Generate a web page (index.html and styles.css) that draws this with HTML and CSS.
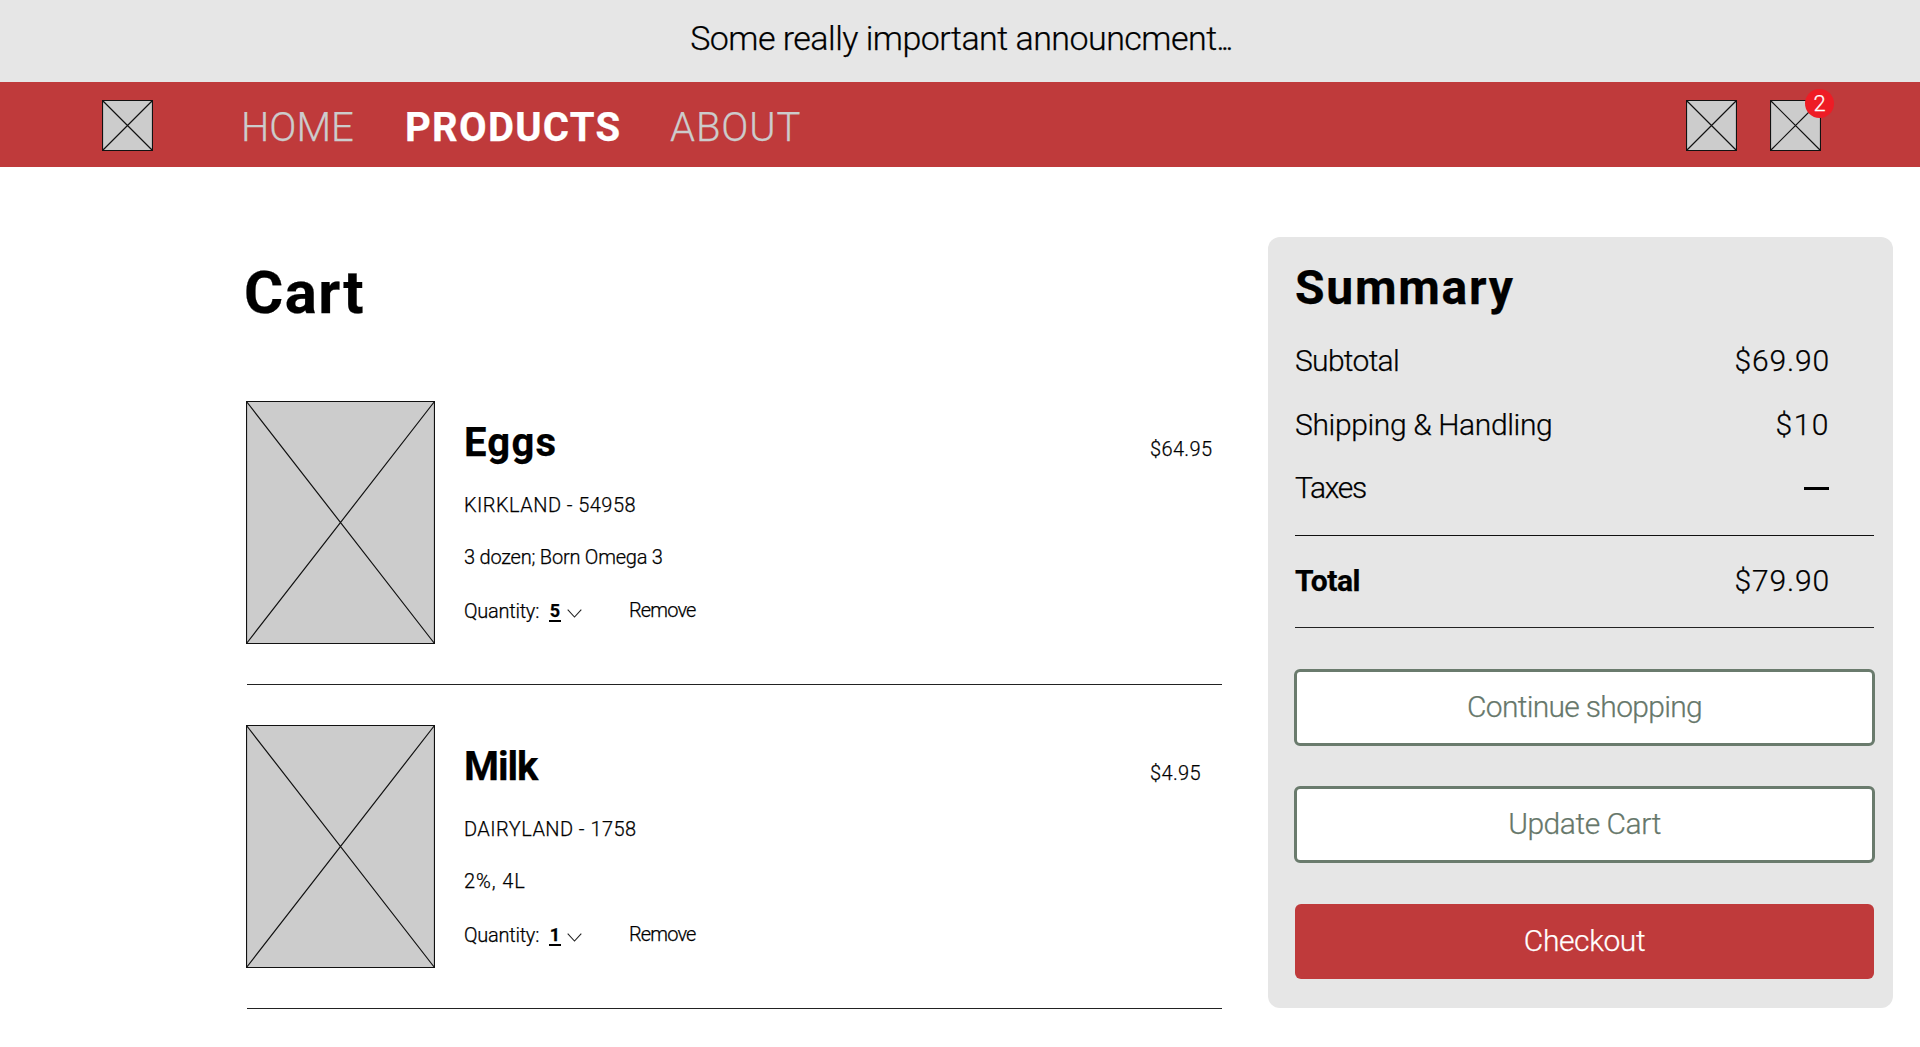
FILE: index.html
```html
<!DOCTYPE html>
<html lang="en">
<head>
<meta charset="utf-8">
<title>Cart</title>
<link rel="stylesheet" href="styles.css">
</head>
<body>
<div class="announcement"><p>Some really important announcment<span class="dots">...</span></p></div>
<header class="navbar">
  <svg class="icon" viewBox="0 0 51 51"><path d="M.5.5h50v50H.5zM.5.5l50 50M50.5.5l-50 50"/></svg>
  <nav class="links">
    <a class="home">HOME</a>
    <a class="active">PRODUCTS</a>
    <a class="about">ABOUT</a>
  </nav>
  <div class="actions">
    <svg class="icon" viewBox="0 0 51 51"><path d="M.5.5h50v50H.5zM.5.5l50 50M50.5.5l-50 50"/></svg>
    <div class="cart-icon">
      <svg class="icon" viewBox="0 0 51 51"><path d="M.5.5h50v50H.5zM.5.5l50 50M50.5.5l-50 50"/></svg>
      <span class="badge">2</span>
    </div>
  </div>
</header>
<main class="page">
  <section class="cart">
    <h1>Cart</h1>
    <article class="item">
      <svg class="photo" viewBox="0 0 189 243"><path d="M.5.5h188v242H.5zM.5.5l188 242M188.5.5l-188 242"/></svg>
      <div class="details">
        <h2 class="eggs">Eggs</h2>
        <p class="brand">KIRKLAND - 54958</p>
        <p class="desc">3 dozen; Born Omega 3</p>
        <div class="controls">
          <span class="label">Quantity:</span>
          <span class="qty">5</span>
          <svg class="chevron" viewBox="0 0 15 9"><path d="M.7.7 7.5 8 14.3.7"/></svg>
          <a class="remove">Remove</a>
        </div>
      </div>
      <p class="price">$64.95</p>
    </article>
    <article class="item">
      <svg class="photo" viewBox="0 0 189 243"><path d="M.5.5h188v242H.5zM.5.5l188 242M188.5.5l-188 242"/></svg>
      <div class="details">
        <h2 class="milk">Milk</h2>
        <p class="brand">DAIRYLAND - 1758</p>
        <p class="desc short">2%, 4L</p>
        <div class="controls">
          <span class="label">Quantity:</span>
          <span class="qty">1</span>
          <svg class="chevron" viewBox="0 0 15 9"><path d="M.7.7 7.5 8 14.3.7"/></svg>
          <a class="remove">Remove</a>
        </div>
      </div>
      <p class="price">$4.95</p>
    </article>
  </section>
  <aside class="summary">
    <h2>Summary</h2>
    <div class="row"><span class="subtotal">Subtotal</span><span class="amount">$69.90</span></div>
    <div class="row"><span>Shipping &amp; Handling</span><span class="amount ten">$10</span></div>
    <div class="row taxes"><span>Taxes</span><span class="dash"></span></div>
    <div class="row total"><strong>Total</strong><span class="amount">$79.90</span></div>
    <div class="buttons">
      <button class="outline">Continue shopping</button>
      <button class="outline update">Update Cart</button>
      <button class="checkout">Checkout</button>
    </div>
  </aside>
</main>
</body>
</html>
```
FILE: styles.css
```css
* { box-sizing: border-box; }
body { margin: 0; background: #fff; color: #000; font-family: Roboto, "Liberation Sans", sans-serif; font-weight: 300; -webkit-text-stroke: 0.25px; }
h1, h2, p { margin: 0; font-weight: inherit; }
svg { display: block; flex: none; }

.announcement { height: 82px; padding-bottom: 7px; background: #e6e6e6; display: flex; align-items: center; justify-content: center; font-size: 34px; letter-spacing: -0.53px; }
.dots { letter-spacing: -3.7px; }

.navbar { height: 85px; padding: 1px 99px 0 102px; background: #bf3a3b; display: flex; align-items: center; }
.icon { width: 51px; height: 51px; fill: #ccc; stroke: #111; stroke-width: 1.2; }
.links { margin-left: 88px; padding-top: 5px; display: grid; grid-template-columns: 164px 265px auto; font-size: 40px; line-height: 48px; color: #ccc; }
.links .active { color: #fff; font-weight: 700; letter-spacing: 1.3px; }
.links .about { letter-spacing: 0.9px; }
.actions { margin-left: auto; display: flex; gap: 33px; }
.cart-icon { position: relative; }
.badge { position: absolute; left: 35px; top: -11px; width: 29px; height: 29px; border-radius: 50%; background: #ee1c25; color: #fff; font-size: 22px; line-height: 30px; text-align: center; }

.page { display: flex; align-items: flex-start; padding-left: 247px; }
.cart { width: 975px; padding-top: 91px; }
.cart h1 { margin: 0 0 73px -3px; font-size: 60px; line-height: 70px; font-weight: 700; letter-spacing: 1.5px; }
.item { display: flex; height: 284px; margin-bottom: 40px; border-bottom: 1px solid #222; }
.photo { width: 189px; height: 243px; margin-left: -1px; fill: #ccc; stroke: #111; stroke-width: 1.2; }
.details { flex: 1; padding: 18px 0 0 29px; font-size: 20px; line-height: 24px; }
.details h2 { font-size: 40px; line-height: 48px; font-weight: 700; }
.eggs { letter-spacing: 1.2px; }
.milk { letter-spacing: -1.1px; }
.brand { margin-top: 26px; letter-spacing: 0.45px; }
.desc { margin-top: 28px; letter-spacing: -0.22px; }
.desc.short { letter-spacing: 0.9px; }
.controls { margin-top: 30px; display: grid; grid-template-columns: 85px 18px 62px auto; }
.label { letter-spacing: -0.25px; }
.qty { width: 12px; height: 23px; border-bottom: 2px solid #000; font-size: 18px; line-height: 24px; font-weight: 700; text-align: center; }
.chevron { width: 15px; height: 9px; margin-top: 10px; fill: none; stroke: #222; stroke-width: 1.1; }
.remove { line-height: 22px; letter-spacing: -0.85px; }
.price { width: 72px; padding-top: 36px; font-size: 20px; line-height: 24px; letter-spacing: 0.36px; }

.summary { width: 625px; height: 771px; margin: 70px 0 0 46px; padding: 23px 19px 0 27px; border-radius: 12px; background: #e6e6e6; }
.summary h2 { margin-bottom: 12px; font-size: 48px; line-height: 56px; font-weight: 700; letter-spacing: 1.75px; }
.row { height: 64px; padding-right: 45px; display: flex; align-items: center; justify-content: space-between; font-size: 30px; letter-spacing: -0.37px; }
.subtotal { letter-spacing: -0.69px; }
.taxes { padding-bottom: 2px; letter-spacing: -1.3px; }
.amount { margin-right: -1px; letter-spacing: 0.86px; }
.amount.ten { letter-spacing: 1.5px; }
.dash { width: 25px; height: 3px; margin-top: 2px; background: #000; }
.total { height: 93px; margin-top: 15px; padding-bottom: 2px; border-top: 1px solid #111; border-bottom: 1px solid #222; }
.total strong { font-weight: 700; letter-spacing: -0.4px; }
.buttons { margin-top: 41px; display: flex; flex-direction: column; gap: 40px; }
.buttons button { height: 77px; padding: 0 0 2px; border-radius: 6px; font: 300 30px Roboto, "Liberation Sans", sans-serif; letter-spacing: -0.68px; }
.buttons .outline { margin: 0 -1px; background: #fff; border: 3px solid #6a7b6d; color: #66776a; }
.buttons .update { letter-spacing: -0.45px; }
.buttons .checkout { height: 75px; margin-top: 1px; border: 0; background: #bf3a3b; color: #fff; letter-spacing: -0.41px; }
```
